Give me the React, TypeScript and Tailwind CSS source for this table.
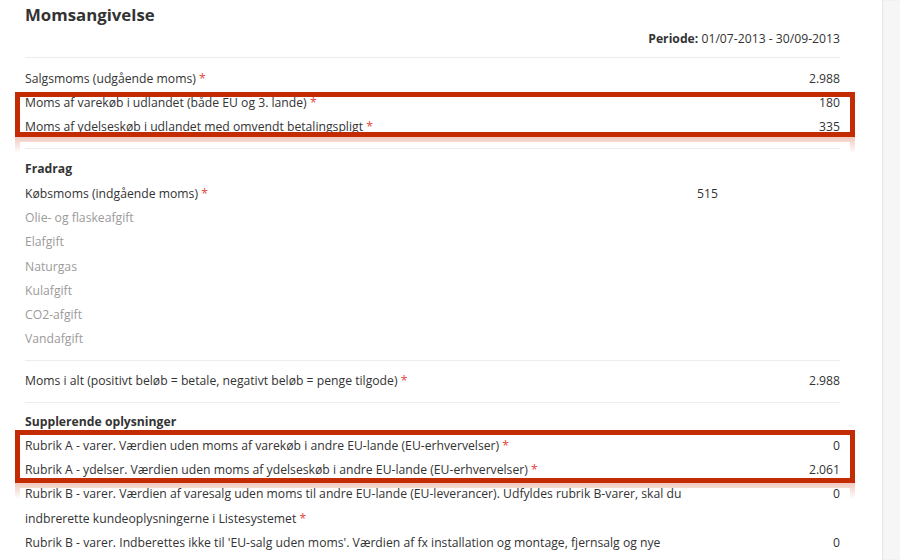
import type { ReactNode } from "react";

type Row = {
  label: ReactNode;
  required?: boolean;
  muted?: boolean;
  bold?: boolean;
  sub?: string;
  value?: string;
};

const Star = () => <span className="text-[#e2483d]"> *</span>;

function FormRow({ label, required, muted, bold, sub, value }: Row) {
  return (
    <div className="flex">
      <div className="flex flex-1 justify-between">
        <span
          className={
            bold
              ? "font-bold text-[#333]"
              : muted
              ? "text-[#9b9b9b]"
              : "text-[#333]"
          }
        >
          {label}
          {required && <Star />}
        </span>
        {sub && <span className="text-[#333]">{sub}</span>}
      </div>
      <div className="w-[122px] shrink-0 text-right text-[#333]">{value}</div>
    </div>
  );
}

function Section({ rows, className }: { rows: Row[]; className: string }) {
  return (
    <div className={className}>
      {rows.map((r, i) => (
        <FormRow key={i} {...r} />
      ))}
    </div>
  );
}

// red annotation frame + its faded reflection underneath
function Highlight({ top, height, reflectTop }: { top: string; height: string; reflectTop: string }) {
  return (
    <>
      <div
        className={`pointer-events-none absolute left-[15px] w-[840px] border-[5px] border-[#c32b02] ${top} ${height}`}
      />
      <div
        className={`pointer-events-none absolute left-[15px] h-[16px] w-[840px] border-x-[5px] border-t-[5px] border-[#c32b02] opacity-25 [mask-image:linear-gradient(to_bottom,black,transparent)] ${reflectTop}`}
      />
    </>
  );
}

export default function App() {
  return (
    <div
      className="flex h-[560px] w-[900px] overflow-hidden bg-white text-[12.2px] leading-[24.3px]"
      style={{ fontFamily: '"Open Sans", "Liberation Sans", sans-serif' }}
    >
      <main className="relative w-[882px] shrink-0 pl-[25px] pr-[42px]">
        <div className="border-b border-[#ececec] pb-[8px]">
          <h1 className="pt-[4px] text-[16.8px] font-bold leading-[22px] text-[#333]">
            Momsangivelse
          </h1>
          <p className="mt-[3px] text-right leading-[20px] text-[#333]">
            <span className="font-bold">Periode:</span> 01/07-2013 - 30/09-2013
          </p>
        </div>

        <Section
          className="border-b border-[#ececec] py-[8.5px]"
          rows={[
            { label: "Salgsmoms (udgående moms)", required: true, value: "2.988" },
            {
              label: "Moms af varekøb i udlandet (både EU og 3. lande)",
              required: true,
              value: "180",
            },
            {
              label: "Moms af ydelseskøb i udlandet med omvendt betalingspligt",
              required: true,
              value: "335",
            },
          ]}
        />

        <Section
          className="border-b border-[#ececec] py-[8.5px]"
          rows={[
            { label: "Fradrag", bold: true },
            { label: "Købsmoms (indgående moms)", required: true, sub: "515" },
            { label: "Olie- og flaskeafgift", muted: true },
            { label: "Elafgift", muted: true },
            { label: "Naturgas", muted: true },
            { label: "Kulafgift", muted: true },
            { label: "CO2-afgift", muted: true },
            { label: "Vandafgift", muted: true },
          ]}
        />

        <Section
          className="border-b border-[#ececec] py-[8px]"
          rows={[
            {
              label: "Moms i alt (positivt beløb = betale, negativt beløb = penge tilgode)",
              required: true,
              value: "2.988",
            },
          ]}
        />

        <Section
          className="pt-[7px]"
          rows={[
            { label: "Supplerende oplysninger", bold: true },
            {
              label: "Rubrik A - varer. Værdien uden moms af varekøb i andre EU-lande (EU-erhvervelser)",
              required: true,
              value: "0",
            },
            {
              label: "Rubrik A - ydelser. Værdien uden moms af ydelseskøb i andre EU-lande (EU-erhvervelser)",
              required: true,
              value: "2.061",
            },
            {
              label:
                "Rubrik B - varer. Værdien af varesalg uden moms til andre EU-lande (EU-leverancer). Udfyldes rubrik B-varer, skal du indbrerette kundeoplysningerne i Listesystemet",
              required: true,
              value: "0",
            },
            {
              label:
                "Rubrik B - varer. Indberettes ikke til 'EU-salg uden moms'. Værdien af fx installation og montage, fjernsalg og nye transportmidler til ikke momsregistrerede kunder i andre EU-lande",
              required: true,
              value: "0",
            },
          ]}
        />

        <Highlight top="top-[92px]" height="h-[45px]" reflectTop="top-[137px]" />
        <Highlight top="top-[430px]" height="h-[53px]" reflectTop="top-[483px]" />
      </main>
      <aside className="flex-1 bg-[#f6f6f6] shadow-[inset_1px_0_2px_rgba(0,0,0,0.07)]" />
    </div>
  );
}
